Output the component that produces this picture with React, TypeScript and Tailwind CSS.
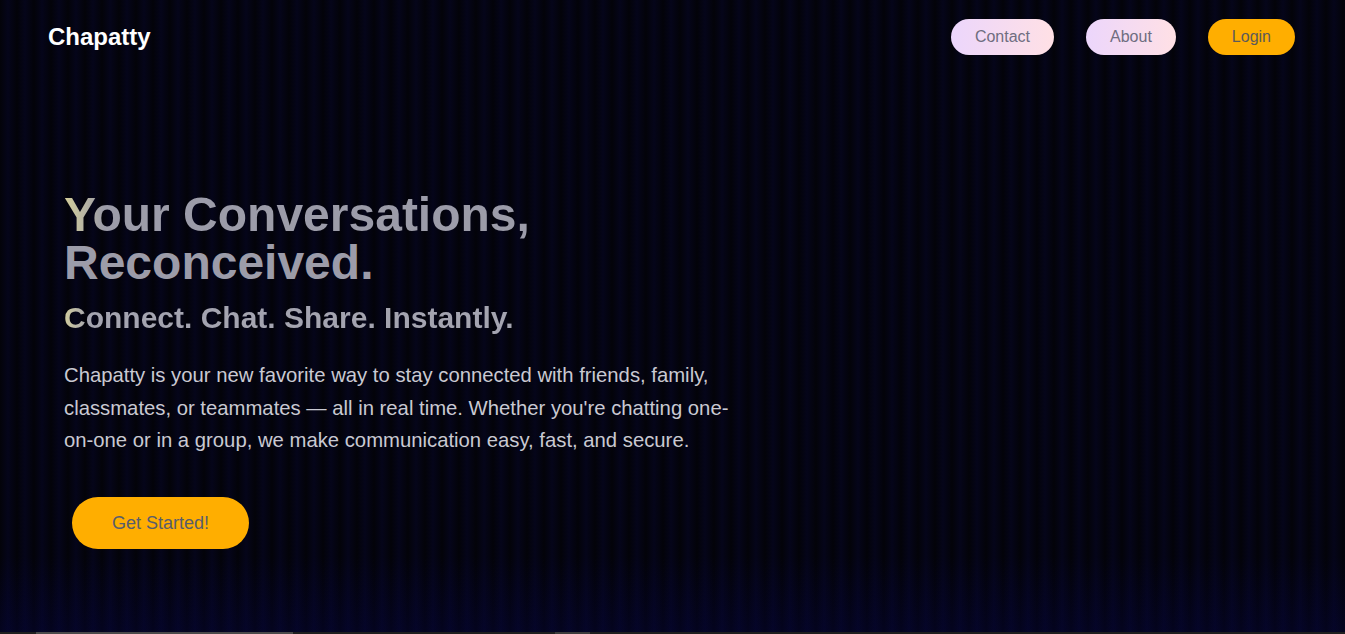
import React from "react";

export default function App() {
  return (
    <div className="w-full h-[634px] overflow-hidden bg-[#030309] font-['Liberation_Sans',Arial,sans-serif]">
      <div className="h-[632px] [background-image:linear-gradient(180deg,rgba(0,0,0,0)_88%,rgba(6,6,70,0.35)_100%),repeating-linear-gradient(90deg,#030309_0px,#05051a_8px,#030309_17px)]">
        <header className="flex items-center justify-between pl-12 pr-[50px] pt-[19px]">
          <div className="text-2xl font-bold text-white leading-9">Chapatty</div>
          <nav className="flex items-center gap-8">
            <button className="h-9 px-6 rounded-full text-base text-[#6f6d80] bg-[linear-gradient(90deg,#ecd6fc,#ffe0e5)]">Contact</button>
            <button className="h-9 px-6 rounded-full text-base text-[#6f6d80] bg-[linear-gradient(90deg,#ecd6fc,#ffe0e5)]">About</button>
            <button className="h-9 px-6 rounded-full text-base text-[#5d5a5a] bg-[#ffae00]">Login</button>
          </nav>
        </header>
        <section className="pl-16 mt-[136px]">
          <h1 className="text-5xl font-bold leading-[48px] text-[#9c9ca9]">
            <span className="inline-block bg-[linear-gradient(90deg,#d4cf9c_0px,#9c9ca9_40px)] bg-clip-text text-transparent">
              Your Conversations,
            </span>
            <br />
            Reconceived.
          </h1>
          <h2 className="mt-[13px] text-3xl font-bold leading-9">
            <span className="inline-block bg-[linear-gradient(90deg,#d2cd9e_0px,#a4a4b0_24px)] bg-clip-text text-transparent">
              Connect. Chat. Share. Instantly.
            </span>
          </h2>
          <p className="mt-[23px] w-[682px] text-[20.3px] leading-[32.5px] text-[#c9c9d2]">
            Chapatty is your new favorite way to stay connected with friends, family, classmates, or teammates — all in real time. Whether you're chatting one-on-one or in a group, we make communication easy, fast, and secure.
          </p>
          <button className="mt-[40px] ml-2 h-[52px] w-[177px] rounded-full bg-[#ffae00] text-lg text-[#585d6c]">
            Get Started!
          </button>
        </section>
      </div>
      <div className="h-[2px] bg-[#1f1f1f] flex">
        <div className="ml-[36px] w-[257px] h-[2px] bg-[#4a4a4a]" />
        <div className="ml-[262px] w-[35px] h-[2px] bg-[#3c3c3c]" />
      </div>
    </div>
  );
}
